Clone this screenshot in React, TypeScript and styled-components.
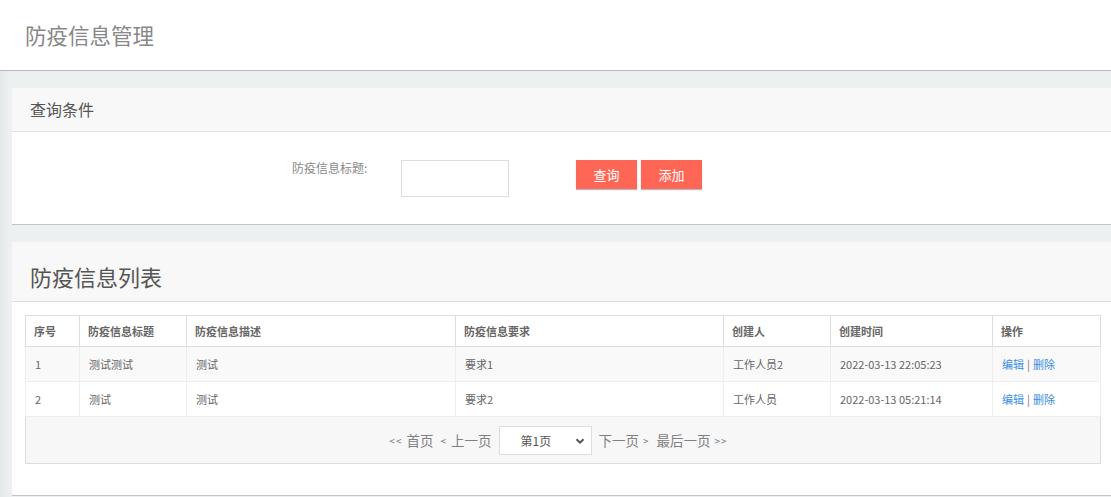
import styled, { createGlobalStyle } from 'styled-components';

interface EpidemicItem {
  id: number;
  title: string;
  description: string;
  requirement: string;
  creator: string;
  createdAt: string;
}

const items: EpidemicItem[] = [
  { id: 1, title: '测试测试', description: '测试', requirement: '要求1', creator: '工作人员2', createdAt: '2022-03-13 22:05:23' },
  { id: 2, title: '测试', description: '测试', requirement: '要求2', creator: '工作人员', createdAt: '2022-03-13 05:21:14' }
];

const columns = [
  { label: '序号', width: 54 },
  { label: '防疫信息标题', width: 107 },
  { label: '防疫信息描述', width: 269 },
  { label: '防疫信息要求', width: 268 },
  { label: '创建人', width: 107 },
  { label: '创建时间', width: 162 },
  { label: '操作', width: 108 }
];

const App = () => {
  return (
    <>
      <GlobalStyle />
      <Header>
        <PageTitle>防疫信息管理</PageTitle>
      </Header>
      <Main>
        <Panel>
          <PanelHeading>查询条件</PanelHeading>
          <SearchBody>
            <Label>防疫信息标题:</Label>
            <Input type="text" />
            <Buttons>
              <Button>查询</Button>
              <Button>添加</Button>
            </Buttons>
          </SearchBody>
        </Panel>

        <Panel>
          <ListHeading>防疫信息列表</ListHeading>
          <ListBody>
            <Table>
              <colgroup>
                {columns.map((col) => (
                  <col key={col.label} style={{ width: col.width }} />
                ))}
              </colgroup>
              <thead>
                <tr>
                  {columns.map((col) => (
                    <Th key={col.label}>{col.label}</Th>
                  ))}
                </tr>
              </thead>
              <tbody>
                {items.map((item, index) => (
                  <Row key={item.id} $striped={index % 2 === 0}>
                    <Td>{item.id}</Td>
                    <Td>{item.title}</Td>
                    <Td>{item.description}</Td>
                    <Td>{item.requirement}</Td>
                    <Td>{item.creator}</Td>
                    <Td>{item.createdAt}</Td>
                    <Td>
                      <ActionLink href="#">编辑</ActionLink>
                      <Sep>|</Sep>
                      <ActionLink href="#">删除</ActionLink>
                    </Td>
                  </Row>
                ))}
                <tr>
                  <PagerCell colSpan={7}>
                    <Pager>
                      <PageLink>
                        <Arrow>&lt;&lt;</Arrow>首页
                      </PageLink>
                      <PageLink>
                        <Arrow>&lt;</Arrow>上一页
                      </PageLink>
                      <SelectWrap>
                        <PageSelect defaultValue="1">
                          <option value="1">第1页</option>
                        </PageSelect>
                        <Chevron viewBox="0 0 10 10">
                          <path d="M1.5 3.2 L5 6.6 L8.5 3.2" fill="none" stroke="#555" strokeWidth="2" />
                        </Chevron>
                      </SelectWrap>
                      <PageLink>
                        下一页<Arrow>&gt;</Arrow>
                      </PageLink>
                      <PageLink>
                        最后一页<Arrow>&gt;&gt;</Arrow>
                      </PageLink>
                    </Pager>
                  </PagerCell>
                </tr>
              </tbody>
            </Table>
          </ListBody>
        </Panel>
      </Main>
    </>
  );
};

const GlobalStyle = createGlobalStyle`
  html, body {
    margin: 0;
    padding: 0;
    background: #ecf0f1;
    font-family: "Noto Sans CJK SC", "Liberation Sans", sans-serif;
    overflow: hidden;
  }
  body {
    box-shadow: inset 8px 0 8px -6px rgba(0, 0, 0, 0.06);
    min-height: 497px;
  }
`;

const Header = styled.header`
  height: 70px;
  background: #fff;
  border-bottom: 1px solid #b3b8b8;
  display: flex;
  align-items: center;
  padding-left: 25px;
`;

const PageTitle = styled.h1`
  margin: 0 0 2px;
  font-size: 21.5px;
  font-weight: normal;
  color: #888;
`;

const Main = styled.main`
  padding: 17px 0 0 12px;
  display: flex;
  flex-direction: column;
  gap: 17px;
`;

const Panel = styled.section`
  background: #fff;
  border-bottom: 1px solid #c2c4c4;
  margin-right: -4px;
`;

const PanelHeading = styled.h2`
  margin: 0;
  height: 43px;
  line-height: 43px;
  padding-left: 18px;
  background: #f8f8f8;
  border-bottom: 1px solid #e0e0e0;
  font-size: 16px;
  font-weight: normal;
  color: #555;
`;

const SearchBody = styled.div`
  height: 92px;
  box-sizing: border-box;
  padding: 28px 0 0 280px;
  display: flex;
  align-items: flex-start;
`;

const Label = styled.label`
  width: 109px;
  font-size: 12px;
  line-height: 16px;
  color: #888;
`;

const Input = styled.input`
  width: 108px;
  height: 37px;
  box-sizing: border-box;
  border: 1px solid #ddd;
  outline: none;
  padding: 0 6px;
`;

const Buttons = styled.div`
  display: flex;
  gap: 4px;
  margin-left: 67px;
`;

const Button = styled.button`
  width: 61px;
  height: 29px;
  border: none;
  background: #ff6655;
  color: #fff;
  font-family: inherit;
  font-size: 13px;
  box-shadow: 0 1px 1px #b7bcc4;
  cursor: pointer;
`;

const ListHeading = styled.h2`
  margin: 0;
  height: 60px;
  line-height: 68px;
  box-sizing: border-box;
  padding-left: 18px;
  background: #f8f8f8;
  border-bottom: 1px solid #ddd;
  font-size: 22px;
  font-weight: normal;
  color: #555;
`;

const ListBody = styled.div`
  padding: 13px 15px 31px 13px;
`;

const Table = styled.table`
  width: 1075px;
  border-collapse: collapse;
  table-layout: fixed;
  border: 1px solid #ddd;
  font-size: 11px;
`;

const Th = styled.th`
  height: 30px;
  padding: 0 8px;
  text-align: left;
  font-weight: bold;
  color: #666;
  border: 1px solid #ddd;
`;

const Row = styled.tr<{ $striped: boolean }>`
  background: ${(p) => (p.$striped ? '#f9f9f9' : '#fff')};
`;

const Td = styled.td`
  height: 34px;
  padding: 0 9px;
  color: #666;
  border: 1px solid #eee;
  white-space: nowrap;
`;

const ActionLink = styled.a`
  color: #3a8ee6;
  text-decoration: none;
`;

const Sep = styled.span`
  color: #777;
  margin: 0 3px;
`;

const PagerCell = styled.td`
  height: 46px;
  padding: 0;
  background: #f7f7f7;
  border-top: 1px solid #eee;
`;

const Pager = styled.div`
  display: flex;
  align-items: center;
  justify-content: center;
  gap: 7px;
  padding-right: 9px;
`;

const PageLink = styled.span`
  font-size: 13.5px;
  color: #808080;
  display: flex;
  align-items: center;
  gap: 4px;
`;

const Arrow = styled.span`
  font-size: 10px;
  letter-spacing: 1px;
  color: #777;
`;

const SelectWrap = styled.span`
  position: relative;
  display: inline-block;
`;

const PageSelect = styled.select`
  appearance: none;
  width: 93px;
  height: 29px;
  border: 1px solid #ddd;
  background: #fff;
  padding: 0 0 0 21px;
  font-family: inherit;
  font-size: 12px;
  color: #555;
  outline: none;
`;

const Chevron = styled.svg`
  position: absolute;
  right: 7px;
  top: 10px;
  width: 10px;
  height: 10px;
  pointer-events: none;
`;

export default App;
